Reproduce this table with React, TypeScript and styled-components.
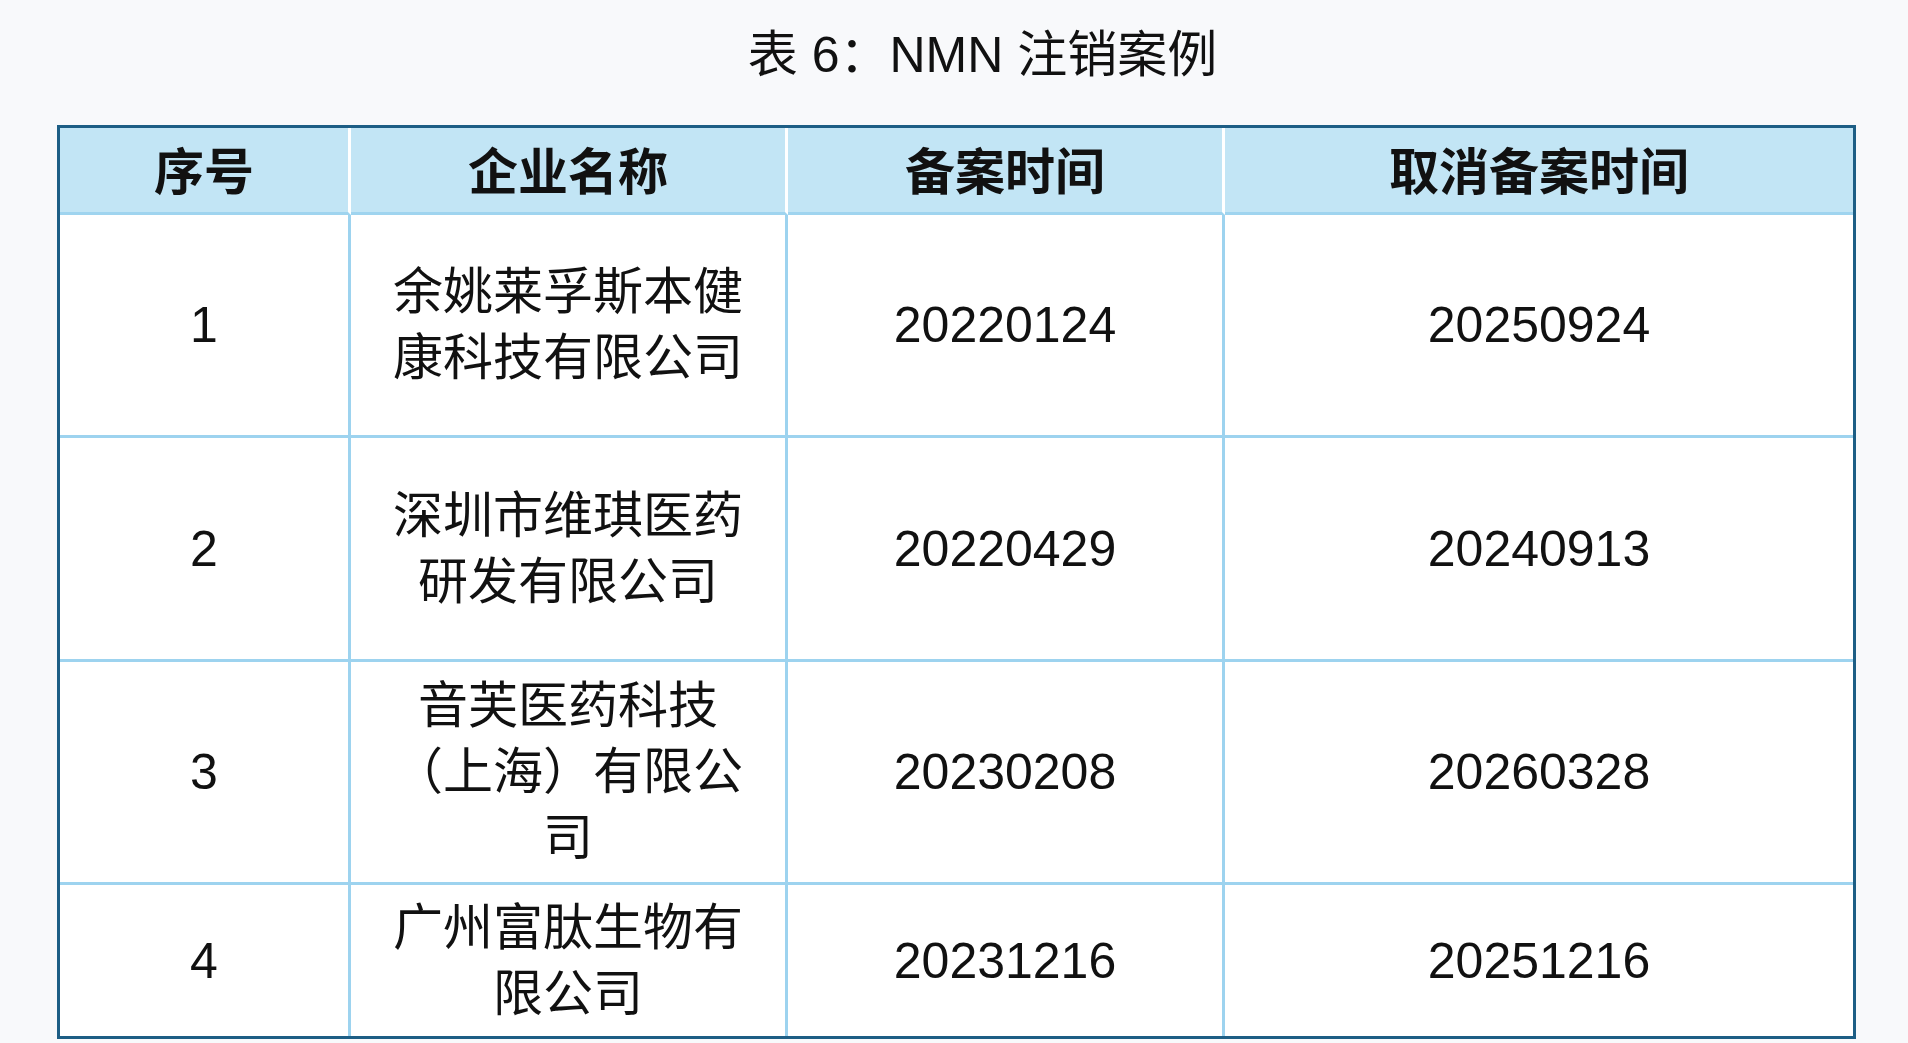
import styled, { createGlobalStyle } from "styled-components"

type Row = {
  no: string
  name: string
  filed: string
  cancelled: string
  height: number
}

const rows: Row[] = [
  { no: "1", name: "余姚莱孚斯本健康科技有限公司", filed: "20220124", cancelled: "20250924", height: 223 },
  { no: "2", name: "深圳市维琪医药研发有限公司", filed: "20220429", cancelled: "20240913", height: 224 },
  { no: "3", name: "音芙医药科技（上海）有限公司", filed: "20230208", cancelled: "20260328", height: 223 },
  { no: "4", name: "广州富肽生物有限公司", filed: "20231216", cancelled: "20251216", height: 151 },
]

const headers = ["序号", "企业名称", "备案时间", "取消备案时间"]

export default function App() {
  return (
    <>
      <GlobalStyle />
      <Page>
        <Title>表 6：NMN 注销案例</Title>
        <Table $rows={rows.map((r) => r.height)}>
          {headers.map((h, i) => (
            <HeaderCell key={h} $last={i === headers.length - 1}>
              {h}
            </HeaderCell>
          ))}
          {rows.map((r, ri) => {
            const lastRow = ri === rows.length - 1
            return [r.no, r.name, r.filed, r.cancelled].map((v, ci) => (
              <Cell key={`${ri}-${ci}`} $last={ci === 3} $lastRow={lastRow}>
                {v}
              </Cell>
            ))
          })}
        </Table>
      </Page>
    </>
  )
}

const GlobalStyle = createGlobalStyle`
  html, body {
    margin: 0;
    padding: 0;
    background: #f8f9fb;
  }
  body {
    font-family: "Liberation Sans", "Noto Sans CJK SC", sans-serif;
    color: #111;
  }
`

const Page = styled.div`
  width: 1908px;
  height: 1043px;
  box-sizing: border-box;
  padding: 26px 0 0 57px;
  overflow: hidden;
`

const Title = styled.div`
  width: 1799px;
  box-sizing: border-box;
  padding-left: 52px;
  height: 58px;
  line-height: 58px;
  margin-bottom: 41px;
  text-align: center;
  font-size: 50px;
  font-weight: 400;
  color: #111;
`

const Table = styled.div<{ $rows: number[] }>`
  display: grid;
  grid-template-columns: 291px 437px 437px 628px;
  grid-template-rows: 87px ${({ $rows }) => $rows.map((h) => `${h}px`).join(" ")};
  width: 1799px;
  box-sizing: border-box;
  border: 3px solid #1d5e85;
  background: #ffffff;
`

const HeaderCell = styled.div<{ $last: boolean }>`
  display: flex;
  align-items: center;
  justify-content: center;
  box-sizing: border-box;
  padding-bottom: 4px;
  background: #c2e5f5;
  border-right: ${({ $last }) => ($last ? "none" : "3px solid #ffffff")};
  border-bottom: 3px solid #9fd4ef;
  font-size: 50px;
  font-weight: 700;
  color: #111;
`

const Cell = styled.div<{ $last: boolean; $lastRow: boolean }>`
  display: flex;
  align-items: center;
  justify-content: center;
  box-sizing: border-box;
  padding: 0 32px;
  text-align: center;
  border-right: ${({ $last }) => ($last ? "none" : "3px solid #9dd3ef")};
  border-bottom: ${({ $lastRow }) => ($lastRow ? "none" : "3px solid #9dd3ef")};
  font-size: 50px;
  line-height: 66px;
  color: #111;
`
